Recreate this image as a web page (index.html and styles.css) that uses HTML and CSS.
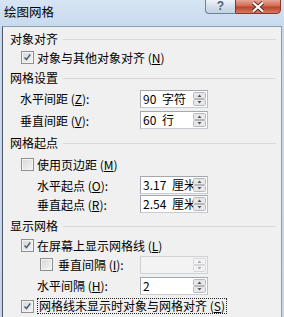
FILE: index.html
```html
<!DOCTYPE html>
<html lang="zh">
<head>
    <meta charset="UTF-8">
    <title>绘图网格</title>
    <link rel="stylesheet" href="styles.css">
</head>
<body>
    <div class="window">
        <div class="titlebar">
            <div class="title">绘图网格</div>
            <div class="tb-btn help">?</div>
            <div class="tb-btn close">
                <svg viewBox="0 0 16 12" width="16" height="12">
                    <path class="x-out" d="M3 1.5l10 9M13 1.5l-10 9"/>
                    <path class="x-in" d="M3 1.5l10 9M13 1.5l-10 9"/>
                </svg>
            </div>
        </div>

        <div class="panel">
            <!-- 对象对齐 -->
            <div class="head"><span>对象对齐</span><i></i></div>
            <div class="check"><span class="cb on"><svg viewBox="0 0 13 13"><path d="M3 6.5l2.3 2.5 4.4-6"/></svg></span>对象与其他对象对齐 (<u>N</u>)</div>

            <!-- 网格设置 -->
            <div class="head"><span>网格设置</span><i></i></div>
            <div class="field">
                <div class="lbl ind1">水平间距 (<u>Z</u>):</div>
                <div class="box"><span class="val">90 字符</span><svg class="spin" viewBox="0 0 13 14"><rect x="0.5" y="0.5" width="12" height="6" rx="1"/><rect x="0.5" y="7.5" width="12" height="6" rx="1"/><path d="M4.5 5h4L6.5 2.5zM4.5 9h4L6.5 11.5z"/></svg></div>
            </div>
            <div class="field">
                <div class="lbl ind1">垂直间距 (<u>V</u>):</div>
                <div class="box"><span class="val">60 行</span><svg class="spin" viewBox="0 0 13 14"><rect x="0.5" y="0.5" width="12" height="6" rx="1"/><rect x="0.5" y="7.5" width="12" height="6" rx="1"/><path d="M4.5 5h4L6.5 2.5zM4.5 9h4L6.5 11.5z"/></svg></div>
            </div>

            <!-- 网格起点 -->
            <div class="head"><span>网格起点</span><i></i></div>
            <div class="check"><span class="cb"></span>使用页边距 (<u>M</u>)</div>
            <div class="field">
                <div class="lbl ind2">水平起点 (<u>O</u>):</div>
                <div class="box"><span class="val">3.17 厘米</span><svg class="spin" viewBox="0 0 13 14"><rect x="0.5" y="0.5" width="12" height="6" rx="1"/><rect x="0.5" y="7.5" width="12" height="6" rx="1"/><path d="M4.5 5h4L6.5 2.5zM4.5 9h4L6.5 11.5z"/></svg></div>
            </div>
            <div class="field">
                <div class="lbl ind2">垂直起点 (<u>R</u>):</div>
                <div class="box"><span class="val">2.54 厘米</span><svg class="spin" viewBox="0 0 13 14"><rect x="0.5" y="0.5" width="12" height="6" rx="1"/><rect x="0.5" y="7.5" width="12" height="6" rx="1"/><path d="M4.5 5h4L6.5 2.5zM4.5 9h4L6.5 11.5z"/></svg></div>
            </div>

            <!-- 显示网格 -->
            <div class="head"><span>显示网格</span><i></i></div>
            <div class="check"><span class="cb on"><svg viewBox="0 0 13 13"><path d="M3 6.5l2.3 2.5 4.4-6"/></svg></span>在屏幕上显示网格线 (<u>L</u>)</div>
            <div class="field">
                <div class="lbl ind3"><span class="cb"></span>垂直间隔 (<u>I</u>):</div>
                <div class="box off"><span class="val"></span><svg class="spin" viewBox="0 0 13 14"><rect x="0.5" y="0.5" width="12" height="6" rx="1"/><rect x="0.5" y="7.5" width="12" height="6" rx="1"/><path d="M4.5 5h4L6.5 2.5zM4.5 9h4L6.5 11.5z"/></svg></div>
            </div>
            <div class="field">
                <div class="lbl ind2">水平间隔 (<u>H</u>):</div>
                <div class="box"><span class="val">2</span><svg class="spin" viewBox="0 0 13 14"><rect x="0.5" y="0.5" width="12" height="6" rx="1"/><rect x="0.5" y="7.5" width="12" height="6" rx="1"/><path d="M4.5 5h4L6.5 2.5zM4.5 9h4L6.5 11.5z"/></svg></div>
            </div>
            <div class="check"><span class="cb on"><svg viewBox="0 0 13 13"><path d="M3 6.5l2.3 2.5 4.4-6"/></svg></span><span class="focus">网格线未显示时对象与网格对齐 (<u>S</u>)</span></div>
        </div>
    </div>
</body>
</html>
```

FILE: styles.css
```css
* {
    margin: 0;
    padding: 0;
    box-sizing: border-box;
}
body {
    width: 284px;
    height: 317px;
    overflow: hidden;
    font-family: "Noto Sans CJK SC", "Liberation Sans", sans-serif;
    font-size: 12px;
    color: #000;
}
.window {
    height: 317px;
    background: linear-gradient(to bottom, #d6e4f3, #c6d9ee 30px, #c4d6ec);
    display: flex;
    flex-direction: column;
}
.titlebar {
    height: 26px;
    display: flex;
    align-items: flex-start;
    padding-right: 3px;
}
.title {
    flex: 1;
    padding-left: 4px;
    font-size: 12.5px;
    line-height: 24px;
}
.tb-btn {
    height: 15px;
    margin-top: -1px;
    border: 1px solid #6f8298;
    border-radius: 0 0 4px 4px;
    display: flex;
    align-items: center;
    justify-content: center;
}
.help {
    width: 30px;
    border-right: none;
    border-radius: 0 0 0 4px;
    background: linear-gradient(to bottom, #eef3f9, #d3deeb 50%, #c3d1e3);
    color: #4d5f7a;
    font-family: "Liberation Sans", sans-serif;
    font-weight: bold;
    font-size: 12px;
    line-height: 13px;
}
.close {
    width: 46px;
    border-color: #7b3b30;
    border-radius: 0 0 4px 0;
    background: linear-gradient(to bottom, #e7a898, #d26b55 45%, #c0412b 55%, #d77a60);
}
.close svg {
    display: block;
}
.x-out {
    stroke: #5c2a22;
    stroke-width: 4;
    fill: none;
}
.x-in {
    stroke: #fff;
    stroke-width: 2.2;
    fill: none;
}
.panel {
    flex: 1;
    margin: 0 2px;
    background: #f0f0f0;
    border: 1px solid #8d9db3;
    border-left-color: #4e5563;
    border-bottom: none;
    padding-top: 1px;
    display: grid;
    grid-template-rows: 20px 19px 21px 21px 22px 22px 22px 20px 18px 24px 16px 23px 19px 22px;
}
.head {
    display: flex;
    align-items: center;
    padding-left: 7px;
    padding-right: 5px;
}
.head i {
    flex: 1;
    height: 1px;
    margin-left: 5px;
    margin-top: 2px;
    background: #d5dade;
}
.check {
    display: flex;
    align-items: center;
    padding-left: 18px;
    white-space: nowrap;
}
.cb {
    width: 13px;
    height: 13px;
    flex: none;
    margin-right: 3px;
    border: 1px solid #8e8f8f;
    background: linear-gradient(135deg, #d6d6d6, #f6f6f6);
    box-shadow: inset 0 0 0 1px #f4f4f4;
}
.cb svg {
    display: block;
    width: 11px;
    height: 11px;
}
.cb path {
    fill: none;
    stroke: #4b5e7c;
    stroke-width: 1.8;
}
.focus {
    border: 1px dotted #222;
    padding: 0 1px;
    line-height: 14px;
}
.field {
    display: flex;
    align-items: center;
}
.lbl {
    width: 137px;
    display: flex;
    align-items: center;
    white-space: nowrap;
}
.ind1 {
    padding-left: 17px;
}
.ind2 {
    padding-left: 34px;
}
.ind3 {
    padding-left: 37px;
}
.ind3 .cb {
    margin-right: 5px;
}
.box {
    width: 68px;
    height: 18px;
    display: flex;
    align-items: center;
    background: #fff;
    border: 1px solid #a3a7ae;
    border-right-color: #b8bcc3;
    border-bottom-color: #c8ccd2;
}
.val {
    flex: 1;
    overflow: hidden;
    white-space: nowrap;
    padding-left: 2px;
    line-height: 16px;
    word-spacing: 3px;
}
.spin {
    width: 13px;
    height: 14px;
    flex: none;
    margin-right: 1px;
}
.spin rect {
    fill: #e8e8e8;
    stroke: #b7b9bd;
    stroke-width: 1;
}
.spin path {
    fill: #505660;
}
.box.off {
    background: #f3f3f3;
    border-color: #cfd2d6;
}
.box.off .spin rect {
    fill: #f2f2f2;
    stroke: #d4d6d9;
}
.box.off .spin path {
    fill: #a8abb0;
}
```
